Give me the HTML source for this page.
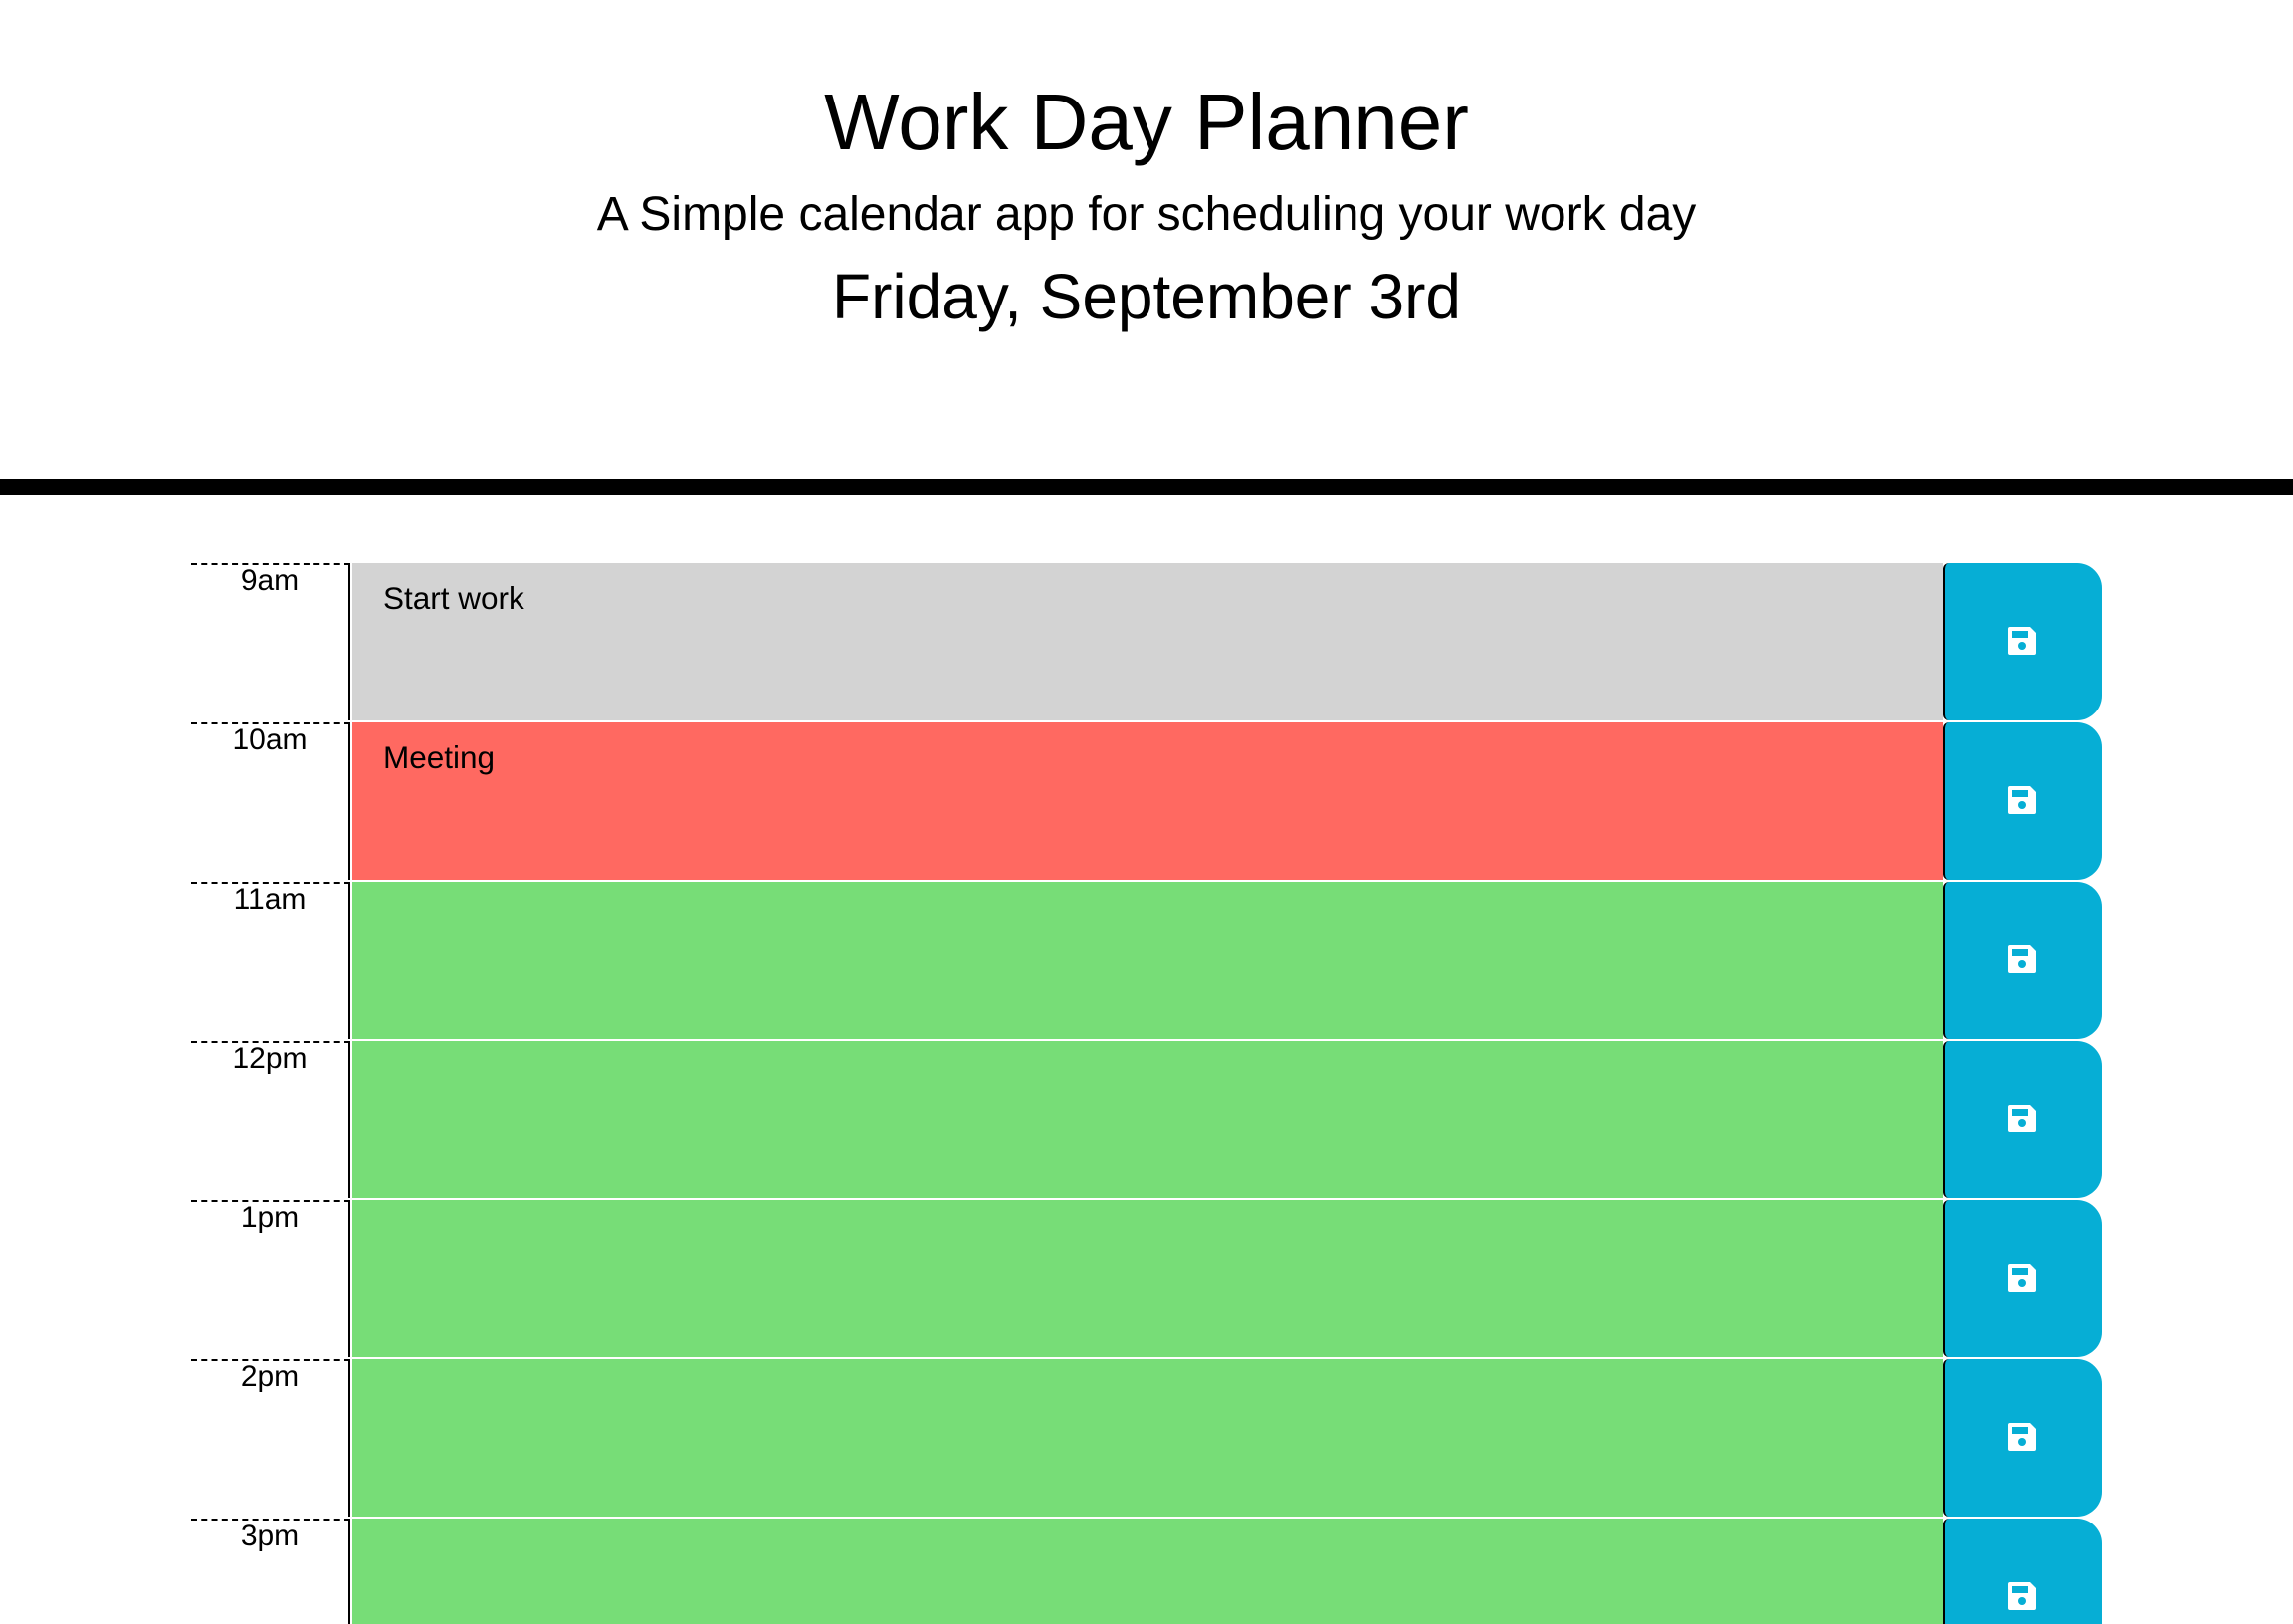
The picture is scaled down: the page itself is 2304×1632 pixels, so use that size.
<!DOCTYPE html>
<html><head><meta charset="utf-8"><style>
html,body{margin:0;padding:0;background:#fff;width:2304px;height:1632px;overflow:hidden;font-family:"Liberation Sans",Arial,sans-serif;color:#000}
#w{position:relative;width:2304px;height:1632px;overflow:hidden}
.c{position:absolute;left:0;width:2304px;text-align:center;white-space:nowrap}
.bar{position:absolute;left:0;top:481px;width:2304px;height:16px;background:#000}
.row{position:absolute;left:0;height:160px;width:2304px}
.hour{position:absolute;left:192px;top:0;width:160px;height:158px;border-top:2px dashed #000;border-right:2px solid #000;box-sizing:border-box;text-align:center;font-size:30px;line-height:32px;padding-top:0px}
.ta{position:absolute;left:354px;top:0;width:1598px;height:158px;font-size:31.5px;padding:17px 31px;box-sizing:border-box}
.btn{position:absolute;left:1952px;top:0;width:160px;height:158px;background:#06aed5;border-left:2px solid #000;box-sizing:border-box;border-radius:6px 25px 25px 6px}
.btn svg{position:absolute;left:64px;top:64px}
</style></head><body><div id="w">
<div class="c" style="top:68px;font-size:80px;line-height:110px">Work Day Planner</div>
<div class="c" style="top:184px;font-size:48px;line-height:64px">A Simple calendar app for scheduling your work day</div>
<div class="c" style="top:258px;font-size:64px;line-height:80px">Friday, September 3rd</div>
<div class="bar"></div>

<div class="row" style="top:566px"><div class="hour">9am</div><div class="ta" style="background:#d3d3d3">Start work</div><div class="btn"><svg width="28" height="28" viewBox="0 0 28 28"><path d="M2 0H22L28 6V26A2 2 0 0 1 26 28H2A2 2 0 0 1 0 26V2A2 2 0 0 1 2 0Z" fill="#fff"/><rect x="4" y="4" width="16" height="7" fill="#06aed5"/><circle cx="14" cy="19" r="4" fill="#06aed5"/></svg></div></div>
<div class="row" style="top:726px"><div class="hour">10am</div><div class="ta" style="background:#ff6961">Meeting</div><div class="btn"><svg width="28" height="28" viewBox="0 0 28 28"><path d="M2 0H22L28 6V26A2 2 0 0 1 26 28H2A2 2 0 0 1 0 26V2A2 2 0 0 1 2 0Z" fill="#fff"/><rect x="4" y="4" width="16" height="7" fill="#06aed5"/><circle cx="14" cy="19" r="4" fill="#06aed5"/></svg></div></div>
<div class="row" style="top:886px"><div class="hour">11am</div><div class="ta" style="background:#77dd77"></div><div class="btn"><svg width="28" height="28" viewBox="0 0 28 28"><path d="M2 0H22L28 6V26A2 2 0 0 1 26 28H2A2 2 0 0 1 0 26V2A2 2 0 0 1 2 0Z" fill="#fff"/><rect x="4" y="4" width="16" height="7" fill="#06aed5"/><circle cx="14" cy="19" r="4" fill="#06aed5"/></svg></div></div>
<div class="row" style="top:1046px"><div class="hour">12pm</div><div class="ta" style="background:#77dd77"></div><div class="btn"><svg width="28" height="28" viewBox="0 0 28 28"><path d="M2 0H22L28 6V26A2 2 0 0 1 26 28H2A2 2 0 0 1 0 26V2A2 2 0 0 1 2 0Z" fill="#fff"/><rect x="4" y="4" width="16" height="7" fill="#06aed5"/><circle cx="14" cy="19" r="4" fill="#06aed5"/></svg></div></div>
<div class="row" style="top:1206px"><div class="hour">1pm</div><div class="ta" style="background:#77dd77"></div><div class="btn"><svg width="28" height="28" viewBox="0 0 28 28"><path d="M2 0H22L28 6V26A2 2 0 0 1 26 28H2A2 2 0 0 1 0 26V2A2 2 0 0 1 2 0Z" fill="#fff"/><rect x="4" y="4" width="16" height="7" fill="#06aed5"/><circle cx="14" cy="19" r="4" fill="#06aed5"/></svg></div></div>
<div class="row" style="top:1366px"><div class="hour">2pm</div><div class="ta" style="background:#77dd77"></div><div class="btn"><svg width="28" height="28" viewBox="0 0 28 28"><path d="M2 0H22L28 6V26A2 2 0 0 1 26 28H2A2 2 0 0 1 0 26V2A2 2 0 0 1 2 0Z" fill="#fff"/><rect x="4" y="4" width="16" height="7" fill="#06aed5"/><circle cx="14" cy="19" r="4" fill="#06aed5"/></svg></div></div>
<div class="row" style="top:1526px"><div class="hour">3pm</div><div class="ta" style="background:#77dd77"></div><div class="btn"><svg width="28" height="28" viewBox="0 0 28 28"><path d="M2 0H22L28 6V26A2 2 0 0 1 26 28H2A2 2 0 0 1 0 26V2A2 2 0 0 1 2 0Z" fill="#fff"/><rect x="4" y="4" width="16" height="7" fill="#06aed5"/><circle cx="14" cy="19" r="4" fill="#06aed5"/></svg></div></div>
</div></body></html>
